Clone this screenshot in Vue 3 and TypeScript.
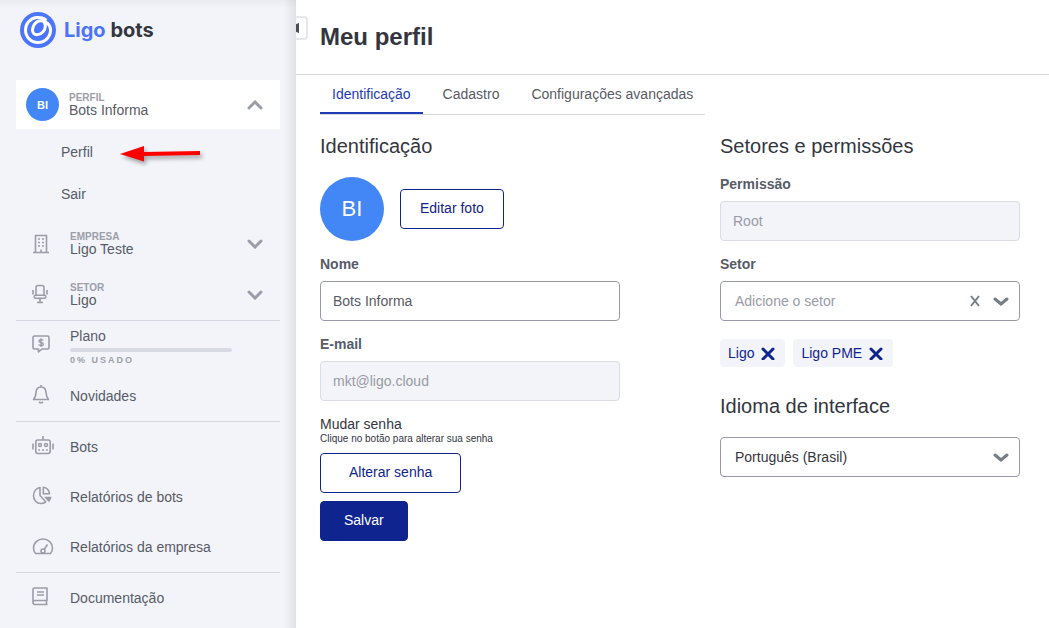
<script setup lang="ts">
import { ref } from 'vue'

interface NavItem {
  label: string
  icon: string
}

const reports: NavItem[] = [
  { label: 'Bots', icon: 'robot' },
  { label: 'Relatórios de bots', icon: 'pie' },
  { label: 'Relatórios da empresa', icon: 'gauge' },
]
const tabs = ['Identificação', 'Cadastro', 'Configurações avançadas']
const activeTab = ref(tabs[0])
const profileOpen = ref(true)
const usage = ref(0)
const name = ref('Bots Informa')
const email = ref('mkt@ligo.cloud')
const sectorQuery = ref('')
const sectors = ref(['Ligo', 'Ligo PME'])
const language = ref('pt-BR')

function removeSector(sector: string) {
  sectors.value = sectors.value.filter((s) => s !== sector)
}
</script>

<template>
  <div class="page">
    <aside class="sidebar">
      <a class="logo" href="#" aria-label="Ligo bots">
        <svg width="36" height="36" viewBox="0 0 36 36" fill="none" aria-hidden="true">
          <circle cx="18" cy="18" r="18" fill="#4c75fd" />
          <path
            d="M25.500 7.500C22.500 5.500 19.500 5.200 16.500 5.600C10 6.500 5.500 11.800 5.500 18C5.500 25 11 30.500 18 30.500C25 30.500 30.500 25 30.500 18C30.500 12.500 26 8.800 21 8.800C16 8.800 12.500 13.500 12.500 18C12.500 20.800 14.300 22.700 17 22.700C21.500 22.700 25.300 18.500 25.300 14C25.300 11.500 24.500 10 23 9"
            stroke="#fff" stroke-width="3" stroke-linecap="round" stroke-linejoin="round"
          />
        </svg>
        <span class="brand"><b>Ligo</b> bots</span>
      </a>

      <nav class="nav">
        <button class="account profile" type="button" :aria-expanded="profileOpen" @click="profileOpen = !profileOpen">
          <span class="avatar small">BI</span>
          <span class="stack"><span class="tag">PERFIL</span><span>Bots Informa</span></span>
          <svg class="chevron" width="16" height="10" viewBox="0 0 16 10" aria-hidden="true"><path d="M2 8L8 2L14 8" /></svg>
        </button>
        <div v-if="profileOpen" class="submenu">
          <a class="sub" href="#">
            Perfil
            <svg class="pointer" width="92" height="28" viewBox="0 0 92 28" aria-hidden="true">
              <path d="M4 15L28 7V13L84 12V16L28 17V22.500Z" fill="#fe0000" />
            </svg>
          </a>
          <a class="sub" href="#">Sair</a>
        </div>

        <button class="account" type="button">
          <svg class="icon" width="24" height="22" viewBox="0 0 24 22" aria-hidden="true">
            <path d="M1 19.500H17M3.500 19V2.500H14.500V19" />
            <path d="M9 19V16.500" />
            <path class="fine" d="M6 6H8M10 6H12M6 9.500H8M10 9.500H12M6 13H8M10 13H12" />
          </svg>
          <span class="stack"><span class="tag">EMPRESA</span><span>Ligo Teste</span></span>
          <svg class="chevron" width="16" height="10" viewBox="0 0 16 10" aria-hidden="true"><path d="M2 2L8 8L14 2" /></svg>
        </button>
        <button class="account" type="button">
          <svg class="icon" width="24" height="22" viewBox="0 0 24 22" aria-hidden="true">
            <path d="M4 11V3.500Q4 1.500 6 1.500H10Q12 1.500 12 3.500V11" />
            <rect x="2.300" y="11.300" width="11.400" height="3" rx="1" />
            <path d="M8 14.500V18M5 18.500H11M1 6V10.500M15 6V10.500" />
          </svg>
          <span class="stack"><span class="tag">SETOR</span><span>Ligo</span></span>
          <svg class="chevron" width="16" height="10" viewBox="0 0 16 10" aria-hidden="true"><path d="M2 2L8 8L14 2" /></svg>
        </button>

        <div class="group">
          <a class="item" href="#">
            <svg class="icon" width="24" height="22" viewBox="0 0 24 22" aria-hidden="true">
              <path d="M2.500 1H15.500Q17 1 17 2.500V12.500Q17 14 15.500 14H10L6.500 17V14H2.500Q1 14 1 12.500V2.500Q1 1 2.500 1Z" />
              <path class="fine" d="M11.300 5.500Q10.800 4.600 9 4.600Q7 4.600 7 6Q7 7.200 9 7.500Q11.300 7.900 11.300 9.200Q11.300 10.600 9 10.600Q7.200 10.600 6.600 9.500M9 3.200V12" />
            </svg>
            <span class="plan">
              <span>Plano</span>
              <span class="meter" role="progressbar" aria-label="Uso do plano" aria-valuemin="0" aria-valuemax="100" :aria-valuenow="usage">
                <span class="meter-fill" :style="{ width: usage + '%' }"></span>
              </span>
              <span class="tag used">{{ usage }}% USADO</span>
            </span>
          </a>
          <a class="item" href="#">
            <svg class="icon" width="24" height="22" viewBox="0 0 24 22" aria-hidden="true">
              <path d="M9 0V2M1.500 14.500H16.500C14.500 12.500 14.200 10.500 14 7.500C13.800 4 12 2 9 2C6 2 4.200 4 4 7.500C3.800 10.500 3.500 12.500 1.500 14.500Z" />
              <path d="M7 17Q9 18.500 11 17" />
            </svg>
            Novidades
          </a>
        </div>

        <div class="group">
          <a v-for="item in reports" :key="item.icon" class="item" href="#">
            <svg v-if="item.icon === 'robot'" class="icon" width="24" height="22" viewBox="0 0 24 22" aria-hidden="true">
              <rect x="3.800" y="4" width="14.400" height="13.500" rx="2" />
              <path d="M11 0V4M1 7.500V13.500M21 7.500V13.500" />
              <circle class="fine" cx="8" cy="9" r="1.500" /><circle class="fine" cx="14" cy="9" r="1.500" />
              <path class="fine" d="M6.200 14H8M10 14H12M14 14H15.800" />
            </svg>
            <svg v-else-if="item.icon === 'pie'" class="icon" width="24" height="22" viewBox="0 0 24 22" aria-hidden="true">
              <path d="M8 1.500V9.500L13.700 15.800C12.500 16.900 11 17.500 9 17.500C4.500 17.500 1.500 14 1.500 9.700C1.500 5.500 4.300 2.300 8 1.500Z" />
              <path d="M11.300 1.200C15 1.700 17 4 17.500 7.700H11.300Z" />
              <path class="solid" d="M12 10.800H19.500C19.300 13 18.300 14.700 16.700 16Z" />
            </svg>
            <svg v-else class="icon" width="24" height="22" viewBox="0 0 24 22" aria-hidden="true">
              <path d="M3.500 17.500C2 16 1.500 14 1.500 12C1.500 6.800 5.800 3 11 3C16.200 3 20.500 6.800 20.500 12C20.500 14 20 16 18.500 17.500Z" />
              <circle cx="11" cy="15" r="2" /><path d="M12.200 13.200L15.500 8.500" />
            </svg>
            {{ item.label }}
          </a>
        </div>

        <div class="group">
          <a class="item" href="#">
            <svg class="icon" width="24" height="22" viewBox="0 0 24 22" aria-hidden="true">
              <path d="M1 15.500V2.500Q1 1 2.500 1H15V13.500H3Q1 13.500 1 15.500Q1 17.500 3 17.500H15.500M14.500 13.500V17.500" />
              <path class="fine" d="M5 5H12M5 8H12" />
            </svg>
            Documentação
          </a>
        </div>
      </nav>
    </aside>

    <main class="main">
      <button class="collapse" type="button" aria-label="Recolher menu">
        <svg width="8" height="10" viewBox="0 0 8 10" aria-hidden="true"><path d="M8 0V10Q3 9 3 5Q3 1 8 0Z" fill="#4b4e58" /></svg>
      </button>
      <header class="header"><h1>Meu perfil</h1></header>

      <div class="body">
        <div class="tabs" role="tablist">
          <button
            v-for="tab in tabs" :key="tab" type="button" role="tab" class="tab"
            :class="{ active: tab === activeTab }" :aria-selected="tab === activeTab" @click="activeTab = tab"
          >{{ tab }}</button>
        </div>

        <form class="columns" @submit.prevent>
          <section>
            <h2>Identificação</h2>
            <div class="photo">
              <span class="avatar large">BI</span>
              <button class="btn" type="button">Editar foto</button>
            </div>
            <div class="field">
              <label for="name">Nome</label>
              <input id="name" v-model="name" class="control" type="text" />
            </div>
            <div class="field">
              <label for="email">E-mail</label>
              <input id="email" v-model="email" class="control" type="email" disabled />
            </div>
            <div class="password">
              <h3>Mudar senha</h3>
              <p>Clique no botão para alterar sua senha</p>
              <button class="btn wide" type="button">Alterar senha</button>
              <button class="btn primary" type="submit">Salvar</button>
            </div>
          </section>

          <section>
            <h2>Setores e permissões</h2>
            <div class="field first">
              <label for="role">Permissão</label>
              <input id="role" class="control" type="text" value="Root" disabled />
            </div>
            <div class="field">
              <label for="sector">Setor</label>
              <div class="control combo">
                <input id="sector" v-model="sectorQuery" type="text" placeholder="Adicione o setor" />
                <button type="button" aria-label="Limpar" @click="sectorQuery = ''">
                  <svg class="mark" width="10" height="12" viewBox="0 0 10 12" aria-hidden="true"><path d="M1 1L9 11M9 1L1 11" /></svg>
                </button>
                <button type="button" aria-label="Abrir lista">
                  <svg class="mark arrow" width="16" height="10" viewBox="0 0 16 10" aria-hidden="true"><path d="M2 3L8 8L14 3" /></svg>
                </button>
              </div>
            </div>
            <div class="chips">
              <span v-for="sector in sectors" :key="sector" class="chip">
                {{ sector }}
                <button type="button" :aria-label="'Remover ' + sector" @click="removeSector(sector)">
                  <svg width="14" height="14" viewBox="0 0 14 14" aria-hidden="true"><path d="M2 3L12 13M12 3L2 13" /></svg>
                </button>
              </span>
            </div>
            <h2 id="language-title">Idioma de interface</h2>
            <div class="picker">
              <select v-model="language" class="control" aria-labelledby="language-title">
                <option value="pt-BR">Português (Brasil)</option>
                <option value="en">English</option>
              </select>
              <svg class="mark arrow" width="16" height="10" viewBox="0 0 16 10" aria-hidden="true"><path d="M2 3L8 8L14 3" /></svg>
            </div>
          </section>
        </form>
      </div>
    </main>
  </div>
</template>

<style>
body {
  margin: 0;
  background: #fff;
}
</style>

<style scoped>
.page {
  display: flex;
  min-height: 100vh;
  font-family: "Liberation Sans", Arial, sans-serif;
  font-size: 14px;
  line-height: 16px;
  color: #575b66;
}
.page * {
  box-sizing: border-box;
}
button,
input,
select {
  font: inherit;
  color: inherit;
}
button {
  border: 0;
  padding: 0;
  background: none;
  cursor: pointer;
}
a {
  color: inherit;
  text-decoration: none;
}
svg {
  display: block;
  flex: none;
}
.sidebar {
  flex: 0 0 296px;
  position: relative;
  z-index: 1;
  padding: 12px 16px 0;
  background:
    linear-gradient(to left, rgba(60, 60, 80, 0.1), rgba(60, 60, 80, 0) 12px),
    linear-gradient(to bottom, rgba(60, 60, 80, 0.05), rgba(60, 60, 80, 0) 8px),
    #f3f4f9;
}
.logo {
  display: flex;
  align-items: center;
  gap: 8px;
  height: 36px;
  padding-left: 4px;
}
.brand {
  font-family: Inter, sans-serif;
  font-size: 20px;
  line-height: 24px;
  font-weight: 700;
  color: #33363f;
}
.brand b {
  font-weight: 700;
  color: #4c75fd;
}
.nav {
  margin-top: 32px;
}
.account {
  display: flex;
  align-items: center;
  gap: 14px;
  width: 100%;
  height: 51px;
  padding: 0 17px 0 16px;
  text-align: left;
}
.profile {
  gap: 10px;
  height: 49px;
  padding-left: 10px;
  background: #fff;
}
.stack {
  flex: 1;
  display: flex;
  flex-direction: column;
}
.stack > span {
  line-height: 14px;
}
.stack > .tag {
  line-height: 10px;
}
.tag {
  font-size: 10px;
  line-height: 12px;
  font-weight: 700;
  color: #9c9eaa;
}
.avatar {
  flex: none;
  display: flex;
  align-items: center;
  justify-content: center;
  border-radius: 50%;
  background: #4287f5;
  color: #fff;
}
.small {
  width: 33px;
  height: 33px;
  font-size: 11px;
  font-weight: 700;
}
.large {
  width: 64px;
  height: 64px;
  font-size: 22px;
}
.chevron {
  fill: none;
  stroke: #9a9ca8;
  stroke-width: 3;
  stroke-linecap: round;
}
.submenu {
  padding: 2px 0 3px;
}
.sub {
  position: relative;
  display: flex;
  align-items: center;
  height: 42px;
  padding-left: 45px;
}
.pointer {
  position: absolute;
  left: 100px;
  top: 8px;
  filter: drop-shadow(2px 3px 2px rgba(0, 0, 0, 0.35));
}
.icon {
  fill: none;
  stroke: #9a9ca8;
  stroke-width: 1.6;
  stroke-linejoin: round;
}
.icon .fine {
  stroke-width: 1.4;
}
.icon .solid {
  fill: #9a9ca8;
  stroke: none;
}
.group {
  border-top: 1px solid #d5d8e0;
}
.item {
  display: flex;
  align-items: center;
  gap: 14px;
  height: 50px;
  padding-left: 16px;
}
.plan {
  display: flex;
  flex-direction: column;
  flex: 1;
  margin-right: 48px;
  padding-top: 2px;
}
.meter {
  height: 4px;
  margin: 4px 0 2px;
  border-radius: 2px;
  background: #d7dae2;
  overflow: hidden;
}
.meter-fill {
  display: block;
  height: 100%;
  background: #4c75fd;
}
.used {
  font-size: 9px;
  letter-spacing: 2px;
}
.main {
  position: relative;
  flex: 1;
  min-width: 0;
}
.collapse {
  position: absolute;
  left: -12px;
  top: 16px;
  width: 24px;
  height: 24px;
  padding-left: 5px;
  border: 2px solid #e6e7ed;
  border-radius: 4px;
  background: #fff;
}
.header {
  display: flex;
  align-items: center;
  height: 75px;
  padding-left: 24px;
  border-bottom: 1px solid #d5d8e0;
}
h1,
h2,
h3,
p {
  margin: 0;
}
h1 {
  font-size: 24px;
  line-height: 28px;
  color: #33363f;
}
.body {
  padding: 0 24px 24px;
}
.tabs {
  display: inline-flex;
  gap: 8px;
  height: 40px;
  border-bottom: 1px solid #d5d8e0;
  vertical-align: top;
}
.tab {
  padding: 0 12px;
  border-bottom: 2px solid transparent;
}
.tab.active {
  color: #1f3bb3;
  border-bottom-color: #1f3bb3;
}
.columns {
  display: grid;
  grid-template-columns: repeat(2, minmax(0, 300px));
  gap: 100px;
  margin-top: 19px;
}
h2 {
  font-size: 20px;
  line-height: 24px;
  font-weight: 400;
  color: #33363f;
}
.photo {
  display: flex;
  align-items: center;
  gap: 16px;
  margin-top: 19px;
}
.field {
  margin-top: 14px;
}
.field.first {
  margin-top: 17px;
}
.field label {
  display: block;
  margin-bottom: 8px;
  line-height: 18px;
  font-weight: 700;
}
.control {
  display: block;
  width: 100%;
  height: 40px;
  padding: 0 12px;
  border: 1px solid #9799a8;
  border-radius: 4px;
  background: #fff;
  outline: none;
}
.control:disabled {
  border-color: #d9dbe5;
  background: #f3f4f9;
  color: #989ba6;
}
.combo {
  display: flex;
  align-items: center;
  gap: 13px;
  padding: 0 10px 0 14px;
}
.combo input {
  flex: 1;
  min-width: 0;
  padding: 0;
  border: 0;
  outline: none;
  background: none;
}
.combo input::placeholder {
  color: #989ba6;
  opacity: 1;
}
.mark {
  fill: none;
  stroke: #757c86;
  stroke-width: 2;
}
.arrow {
  stroke-width: 3;
  stroke-linecap: round;
}
.chips {
  display: flex;
  gap: 8px;
  margin: 18px 0 27px;
}
.chip {
  display: flex;
  align-items: center;
  gap: 7px;
  height: 28px;
  padding: 0 10px 0 8px;
  border-radius: 4px;
  background: #f3f4f9;
  color: #10248f;
}
.chip svg {
  fill: none;
  stroke: #10248f;
  stroke-width: 3;
  stroke-linecap: round;
}
.picker {
  display: grid;
  align-items: center;
  margin-top: 19px;
}
.picker > * {
  grid-area: 1 / 1;
}
.picker select {
  appearance: none;
  padding: 0 14px;
  color: #33363f;
}
.picker svg {
  justify-self: end;
  margin-right: 11px;
  pointer-events: none;
}
.password {
  display: flex;
  flex-direction: column;
  align-items: flex-start;
  gap: 8px;
  margin-top: 14px;
  color: #33363f;
}
h3 {
  font-size: 14px;
  line-height: 18px;
  font-weight: 400;
}
.password p {
  margin-top: -8px;
  font-size: 10px;
  line-height: 12px;
}
.btn {
  height: 40px;
  padding: 0 19px 2px;
  border: 1px solid #10248f;
  border-radius: 4px;
  background: #fff;
  color: #10248f;
}
.btn.wide {
  padding: 0 28px 2px;
}
.btn.primary {
  padding: 0 23px 2px;
  background: #10248f;
  color: #fff;
}
</style>
